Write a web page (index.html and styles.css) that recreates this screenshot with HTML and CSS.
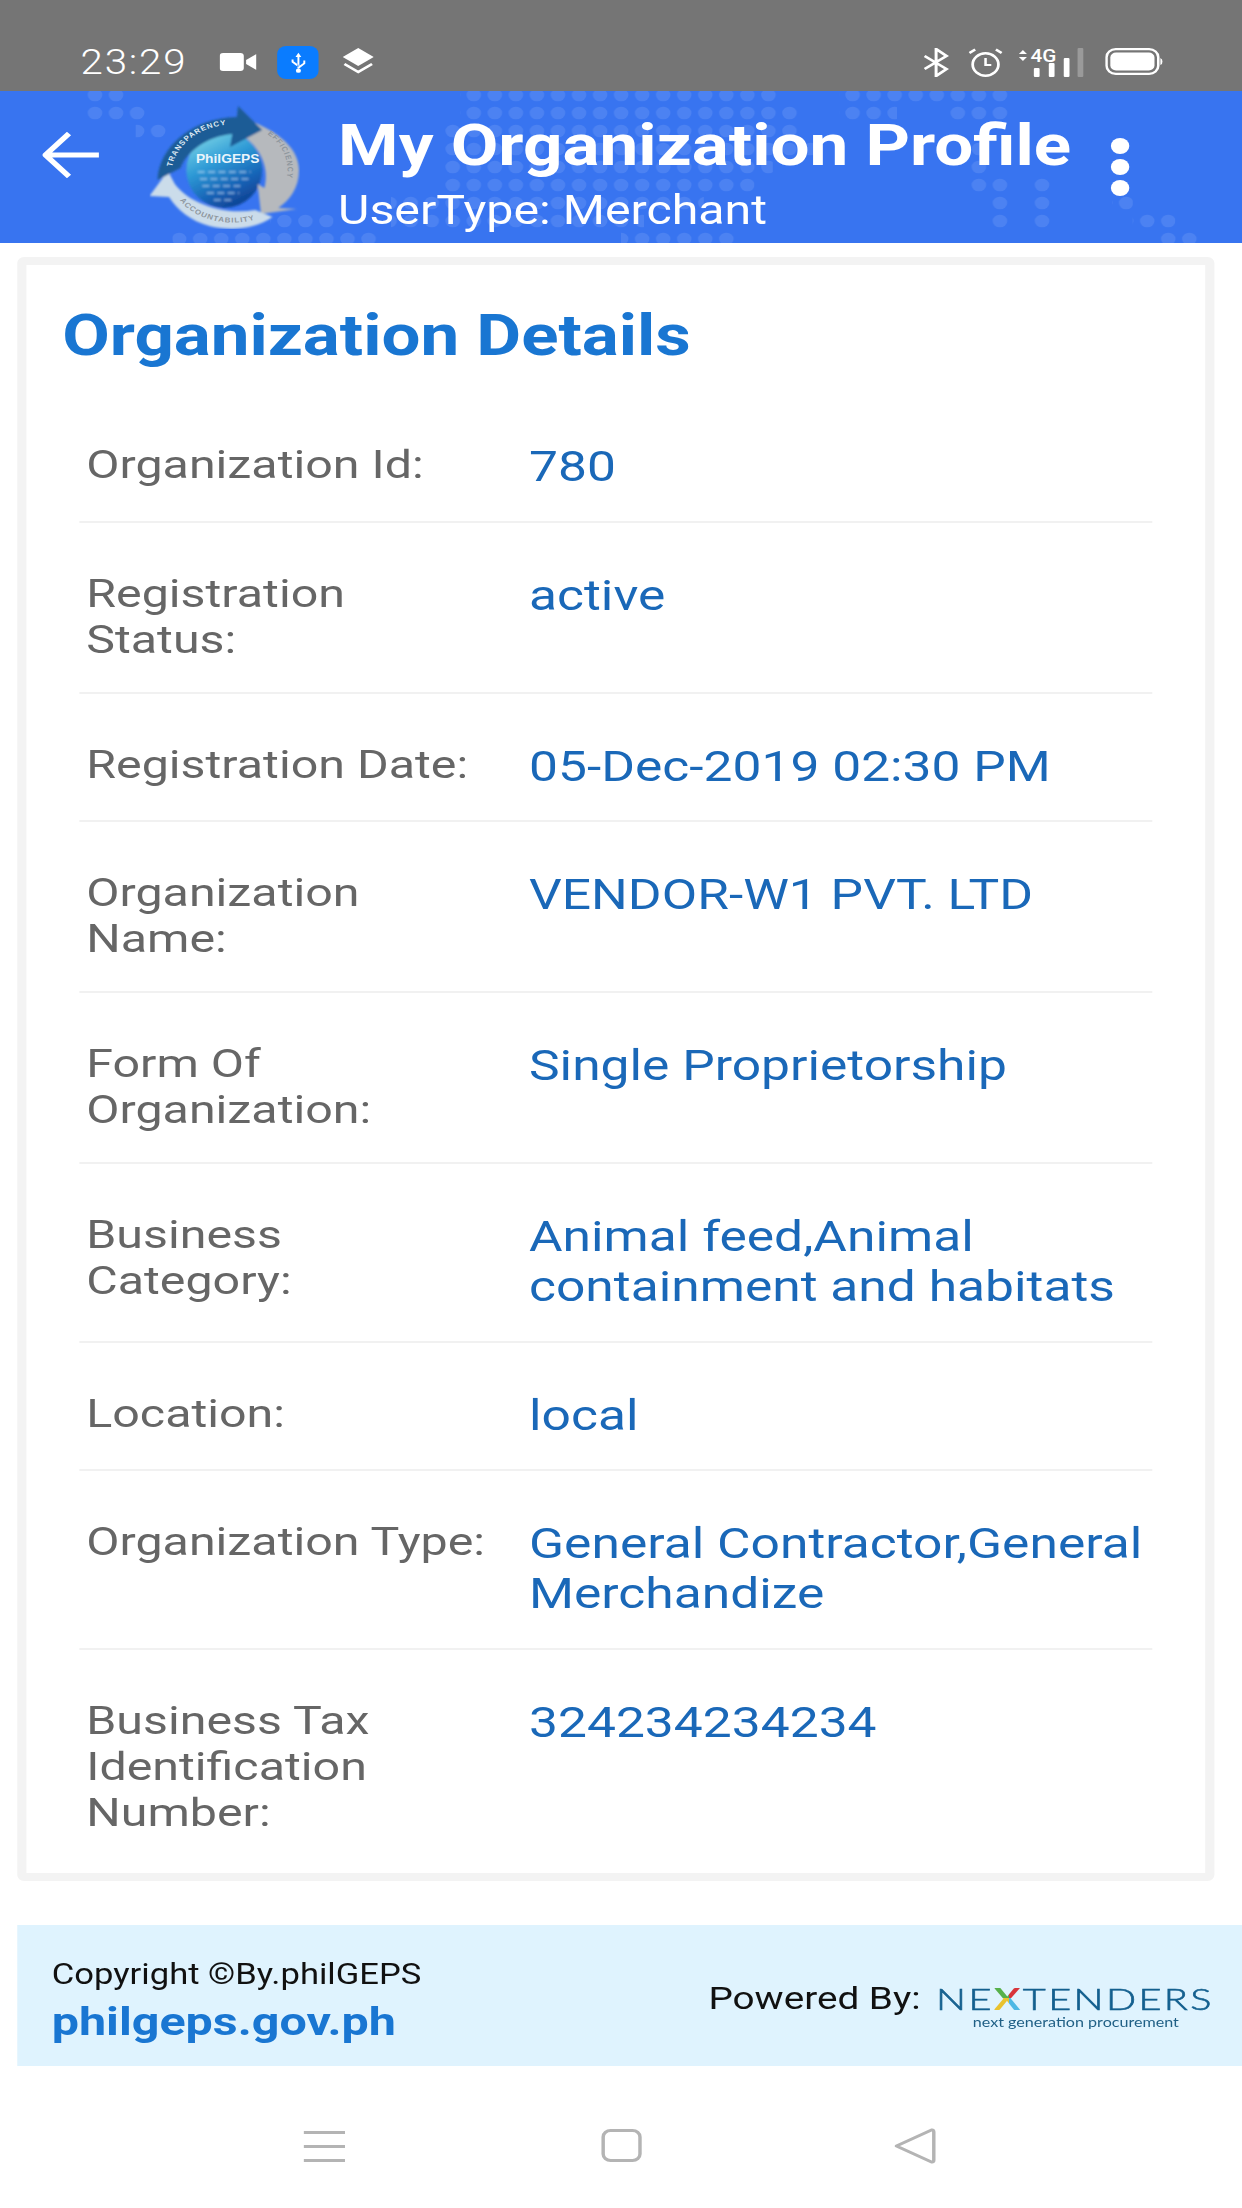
FILE: index.html
```html
<!DOCTYPE html>
<html lang="en">
<head>
<meta charset="utf-8">
<title>My Organization Profile</title>
<link rel="stylesheet" href="styles.css">
</head>
<body>
<div class="screen">
  <div class="status">
    <span class="time">23:29</span>
    <svg class="ic-cam" viewBox="0 0 32 18"><rect x="0" y="0" width="21" height="18" rx="3" fill="#fff"/><path d="M23 7 L32 1 V17 L23 11 Z" fill="#fff"/></svg>
    <span class="usb"><svg viewBox="0 0 20 26" class="ic-usb"><path d="M10 1 L13 6 H11 V19.5 H9 V6 H7 Z M10 17 L15 13 V10 H17 V14 L10 20 Z M10 15 L5 11 V9 H3 V12 L10 18 Z" fill="#fff"/><circle cx="10" cy="22" r="2.6" fill="#fff"/></svg></span>
    <svg class="ic-layers" viewBox="0 0 27 27"><path d="M13.5 0 L27 9 L13.5 18 L0 9 Z" fill="#fff"/><path d="M1.5 16 L13.5 24 L25.5 16" fill="none" stroke="#fff" stroke-width="2.6"/></svg>
    <span class="status-right">
      <svg class="ic-bt" viewBox="0 0 23 29"><path d="M1 8 L20 21 L11 28 V1 L20 8 L1 21" fill="none" stroke="#fff" stroke-width="2.6"/></svg>
      <svg class="ic-alarm" viewBox="0 0 30 29"><circle cx="15" cy="16.5" r="11.2" fill="none" stroke="#fff" stroke-width="2.4"/><path d="M15 10 V17 H20" fill="none" stroke="#fff" stroke-width="2.2"/><path d="M1 5 L6 1.5 M29 5 L24 1.5" stroke="#fff" stroke-width="2.4"/></svg>
      <svg class="ic-signal" viewBox="0 -8 58 37"><path d="M1 6 L4.5 2 L8 6 Z M1 9 L4.5 13 L8 9 Z" fill="#fff"/><text x="11" y="14" class="fourg">4G</text><rect x="14" y="20" width="5" height="9" rx="1" fill="#fff"/><rect x="27" y="15" width="5" height="14" rx="1" fill="#fff"/><rect x="40" y="10" width="5" height="19" rx="1" fill="#fff"/><rect x="52" y="0" width="5" height="29" rx="1" fill="#9a9a9a"/></svg>
      <svg class="ic-batt" viewBox="0 0 50 27"><rect x="1.200" y="1.200" width="45" height="24.600" rx="8" fill="none" stroke="#fff" stroke-width="2.200"/><rect x="4.500" y="4.500" width="38.400" height="18" rx="5" fill="#fff"/><path d="M48 10 Q50 11 50 13.500 Q50 16 48 17 Z" fill="#fff"/></svg>
    </span>
  </div>

  <header class="bar">
    <svg class="dots" viewBox="0 0 1080 152">
      <defs><pattern id="dotgrid" patternUnits="userSpaceOnUse" x="0.4" y="-5" width="18.300" height="18"><circle cx="9" cy="9" r="6.300" fill="#fff" fill-opacity=".1"/></pattern></defs>
      <g fill="url(#dotgrid)">
        <rect x="75" y="-5" width="36" height="18"/><rect x="400" y="-5" width="280" height="18"/><rect x="730" y="-5" width="150" height="18"/>
        <rect x="75" y="13" width="53" height="18"/><rect x="400" y="13" width="296" height="18"/><rect x="730" y="13" width="50" height="18"/><rect x="825" y="13" width="55" height="18"/>
        <rect x="118" y="31" width="28" height="18"/><rect x="385" y="31" width="311" height="18"/>
        <rect x="385" y="49" width="331" height="18"/><rect x="840" y="49" width="20" height="18"/>
        <rect x="385" y="67" width="287" height="18"/><rect x="840" y="67" width="20" height="18"/>
        <rect x="385" y="85" width="271" height="18"/><rect x="840" y="85" width="38" height="18"/><rect x="896" y="85" width="18" height="18"/>
        <rect x="340" y="103" width="272" height="18"/><rect x="860" y="103" width="18" height="18"/><rect x="896" y="103" width="18" height="18"/><rect x="967" y="103" width="18" height="18"/>
        <rect x="235" y="121" width="55" height="18"/><rect x="340" y="121" width="220" height="18"/><rect x="860" y="121" width="18" height="18"/><rect x="896" y="121" width="18" height="18"/><rect x="985" y="121" width="37" height="18"/>
        <rect x="150" y="139" width="180" height="18"/><rect x="540" y="139" width="100" height="18"/><rect x="1005" y="139" width="37" height="18"/>
      </g>
    </svg>
    <svg class="back" viewBox="0 0 50 46"><path d="M49 23 H3 M23 1.500 L2.500 23 L23 44.500" fill="none" stroke="#fff" stroke-width="5"/></svg>
    <svg class="logo" viewBox="0 0 131 125">
      <defs>
        <linearGradient id="globe" x1=".2" y1="0" x2=".7" y2="1"><stop offset="0" stop-color="#7fd8e8"/><stop offset=".4" stop-color="#2e9ad6"/><stop offset=".75" stop-color="#1560b4"/><stop offset="1" stop-color="#0f3f8e"/></linearGradient>
        <filter id="soft"><feGaussianBlur stdDeviation=".8"/></filter>
        <path id="arc-top" d="M19 66 A54 52 0 0 1 80 21"/>
        <path id="arc-right" d="M98 27 A48 46 0 0 1 116 84"/>
        <path id="arc-bottom" d="M24 92 A52 42 0 0 0 96 114"/>
      </defs>
      <g filter="url(#soft)">
        <ellipse cx="65" cy="66" rx="33" ry="38" fill="url(#globe)"/>
        <path d="M42 68 h46 M44 75 h42 M46 82 h36 M50 89 h28 M56 96 h16" stroke="#d5ecff" stroke-width="2.200" stroke-dasharray="6 3" opacity=".45"/>
        <path d="M88 17 C104 24 130 40 130 66 C130 84 122 96 112 104 L128 105 L97 110 L94 80 L100 84 C104 66 98 44 80 31 Z" fill="#b6b9bd"/>
        <path d="M0 92 L16 67 L22 80 C32 96 60 112 92 106 L107 113 C90 126 70 127 52 122 C36 117 24 106 17 93 Z" fill="#cbdcea"/>
        <path d="M7 76 C8 44 36 14 76 13 L77 2 L98 26 L70 43 L72 30 C50 32 32 48 27 64 Z" fill="#1d5c96"/>
      </g>
      <text class="logo-arc"><textPath href="#arc-top" startOffset="4%">TRANS</textPath></text>
      <text class="logo-arc"><textPath href="#arc-top" startOffset="38%">PARENCY</textPath></text>
      <text class="logo-arc logo-arc-grey"><textPath href="#arc-right" startOffset="8%">EFFICIENCY</textPath></text>
      <text class="logo-arc logo-arc-grey"><textPath href="#arc-bottom" startOffset="6%">ACCOUNTABILITY</textPath></text>
      <text x="68" y="59" class="logo-name">PhilGEPS</text>
    </svg>
    <div class="titles">
      <h1 class="title">My Organization Profile</h1>
      <div class="subtitle">UserType: Merchant</div>
    </div>
    <div class="menu"><i></i><i></i><i></i></div>
  </header>

  <main class="card">
    <h2 class="card-title">Organization Details</h2>
    <dl class="rows">
      <div class="row"><dt>Organization Id:</dt><dd>780</dd></div>
      <div class="row"><dt>Registration<br>Status:</dt><dd>active</dd></div>
      <div class="row"><dt>Registration Date:</dt><dd>05-Dec-2019 02:30 PM</dd></div>
      <div class="row"><dt>Organization<br>Name:</dt><dd>VENDOR-W1 PVT. LTD</dd></div>
      <div class="row"><dt>Form Of<br>Organization:</dt><dd>Single Proprietorship</dd></div>
      <div class="row"><dt>Business<br>Category:</dt><dd>Animal feed,Animal containment and habitats</dd></div>
      <div class="row"><dt>Location:</dt><dd>local</dd></div>
      <div class="row"><dt>Organization Type:</dt><dd>General Contractor,General Merchandize</dd></div>
      <div class="row"><dt>Business Tax<br>Identification<br>Number:</dt><dd>324234234234</dd></div>
    </dl>
  </main>

  <footer class="foot">
    <div class="foot-left">
      <div class="copy">Copyright ©By.philGEPS</div>
      <div class="site">philgeps.gov.ph</div>
    </div>
    <div class="powered">Powered By:</div>
    <div class="nx">
      <div class="nx-word"><span>NE</span><span class="nx-x">X</span><span>TENDERS</span></div>
      <div class="nx-tag">next generation procurement</div>
    </div>
  </footer>

  <nav class="nav">
    <svg class="nav-menu" viewBox="0 0 36 31"><path d="M0 1.500 H36 M0 15.500 H36 M0 29.500 H36" stroke="#b4b4b4" stroke-width="3"/></svg>
    <span class="nav-home"></span>
    <svg class="nav-back" viewBox="0 0 37 36"><path d="M2.500 18 L33 2 Q35 1.500 35 4 V32 Q35 34.500 33 34 Z" fill="none" stroke="#b4b4b4" stroke-width="3" stroke-linejoin="round"/></svg>
  </nav>
</div>
</body>
</html>
```
FILE: styles.css
```css
* { box-sizing: border-box; }
html, body { margin: 0; padding: 0; background: #fff; overflow: hidden; }
.screen {
  width: 1080px;
  height: 2208px;
  transform: scaleX(1.15);
  transform-origin: 0 0;
  font-family: Roboto, sans-serif;
  display: flex;
  flex-direction: column;
}

/* status bar */
.status { height: 91px; background: #757575; display: flex; align-items: flex-start; padding-left: 70px; color: #fff; }
.time { font-size: 35px; font-weight: 300; line-height: 41px; margin-top: 42px; width: 121px; letter-spacing: 1.600px; }
.ic-cam { width: 32px; height: 18px; margin-top: 53px; }
.usb { width: 36px; height: 33px; margin: 46px 0 0 18px; background: #0a7cff; border-radius: 8px; display: flex; align-items: center; justify-content: center; }
.ic-usb { width: 17px; height: 24px; }
.ic-layers { width: 27px; height: 27px; margin: 48px 0 0 21px; }
.status-right { margin-left: auto; margin-right: 69px; margin-top: 48px; display: flex; align-items: flex-start; }
.ic-bt { width: 23px; height: 29px; }
.ic-alarm { width: 30px; height: 29px; margin-left: 16px; }
.ic-signal { width: 58px; height: 37px; margin: -8px 0 0 13px; }
.fourg { font-family: Roboto, sans-serif; font-size: 18px; font-weight: 500; fill: #fff; }
.ic-batt { width: 50px; height: 27px; margin-left: 18px; }

/* app bar */
.bar { height: 152px; background: #3874f0; position: relative; display: flex; align-items: flex-start; overflow: hidden; color: #fff; }
.dots { position: absolute; left: 0; top: 0; width: 1080px; height: 152px; }
.back { position: relative; width: 50px; height: 46px; margin: 41px 0 0 37px; flex: none; }
.logo { position: relative; width: 131px; height: 125px; margin: 13px 0 0 43px; flex: none; }
.logo-arc { font-family: "Liberation Sans", sans-serif; font-size: 7px; font-weight: 700; fill: #dfeaf5; letter-spacing: .8px; }
.logo-arc-grey { fill: #8f979e; }
.logo-name { font-family: "Liberation Sans", sans-serif; font-size: 12px; font-weight: 700; fill: #e8f4fb; text-anchor: middle; }
.titles { position: relative; margin-left: 33px; width: 640px; flex: none; }
.title { margin: 0; padding-top: 23px; font-size: 57px; line-height: 64px; font-weight: 700; white-space: nowrap; transform: scaleX(1.055); transform-origin: 0 50%; }
.subtitle { font-size: 40px; line-height: 46px; margin-top: 10px; white-space: nowrap; transform: scaleX(1.05); transform-origin: 0 50%; }
.menu { position: relative; display: flex; flex-direction: column; gap: 5px; margin: 47px 0 0 32px; }
.menu i { display: block; width: 16px; height: 16px; border-radius: 50%; background: #fff; }

/* card */
.card { margin: 14px 24px 0 15px; height: 624px; flex: 1 0 auto; max-height: 1624px; border: 8px solid #f3f3f3; border-radius: 6px; background: #fff; }
.card-title { margin: 0; padding: 11px 0 0 30px; height: 129.400px; font-size: 58px; line-height: 118px; font-weight: 700; color: #1976d2; white-space: nowrap; transform: scaleX(1.035); transform-origin: 0 50%; }
.rows { margin: 0 46px 0 46px; }
.row { display: grid; grid-template-columns: 385px 1fr; padding: 48px 0 28.700px 6px; border-bottom: 2px solid #f1f1f1; }
.row:last-child { border-bottom: 0; padding-bottom: 0; }
.row dt { font-size: 39px; line-height: 46px; color: #666; transform: scaleX(1.078); transform-origin: 0 50%; }
.row dd { margin: 0; font-size: 42px; line-height: 50px; color: #1a68b8; transform: scaleX(1.067); transform-origin: 0 50%; }

/* footer */
.foot { margin: 44px 0 0 15px; height: 141px; flex: none; background: #dff3fe; display: flex; align-items: flex-start; }
.foot-left { padding-left: 30px; width: 601px; flex: none; }
.copy { font-size: 29px; line-height: 34px; margin-top: 32px; color: #111; white-space: nowrap; transform: scaleX(1.037); transform-origin: 0 50%; }
.site { font-size: 39px; line-height: 44px; font-weight: 700; color: #1976d2; margin-top: 9px; white-space: nowrap; transform: scaleX(1.08); transform-origin: 0 50%; }
.powered { font-size: 31px; line-height: 36px; margin-top: 56px; width: 198px; flex: none; color: #111; white-space: nowrap; transform: scaleX(1.085); transform-origin: 0 50%; }
.nx { margin-top: 58px; width: 240px; flex: none; }
.nx-word { display: flex; font-family: Lato, sans-serif; font-size: 30px; line-height: 30px; font-weight: 300; color: #14608f; letter-spacing: 1.800px; white-space: nowrap; transform: scaleX(1.15); transform-origin: 0 50%; -webkit-text-stroke: .6px #14608f; }
.nx-x { background: conic-gradient(#d8343a 0 25%, #4db8e4 25% 50%, #e9c22e 50% 75%, #57b04a 75% 100%); -webkit-background-clip: text; background-clip: text; color: transparent; -webkit-text-stroke: 0; font-weight: 700; }
.nx-tag { font-family: Lato, sans-serif; font-size: 14px; line-height: 16px; color: #1f5f85; text-align: center; margin: 1px 0 0 3px; white-space: nowrap; }

/* nav bar */
.nav { height: 142px; flex: none; display: flex; align-items: flex-start; padding: 63px 0 0 264px; }
.nav-menu { width: 36px; height: 31px; margin-top: 2px; }
.nav-home { width: 35px; height: 33px; margin-left: 223px; border: 3px solid #b4b4b4; border-radius: 8px; }
.nav-back { width: 37px; height: 36px; margin-left: 219px; margin-top: -1px; }
```
